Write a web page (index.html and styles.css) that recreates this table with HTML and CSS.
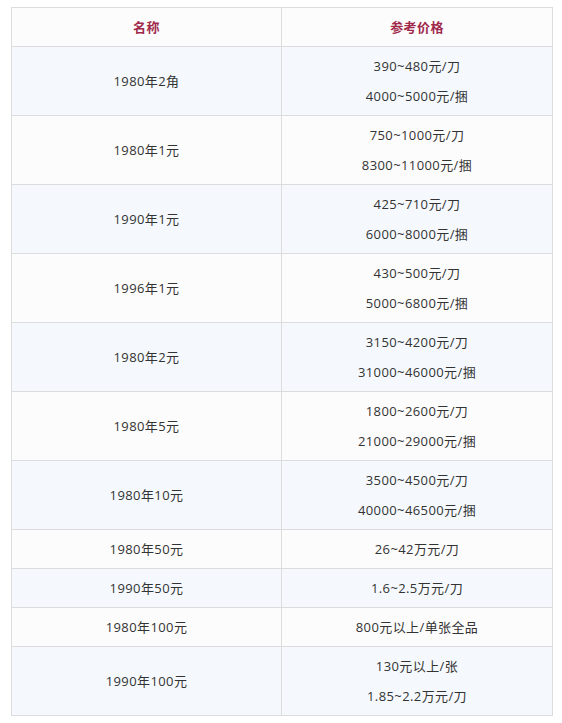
FILE: index.html
```html
<!DOCTYPE html>
<html lang="zh">
<head>
<meta charset="utf-8">
<link rel="stylesheet" href="styles.css">
</head>
<body>
<div class="wrap">
<table class="price">
<colgroup><col class="c1"><col class="c2"></colgroup>
<thead>
<tr><th>名称</th><th>参考价格</th></tr>
</thead>
<tbody>
<tr class="alt"><td>1980年2角</td><td><p>390~480元/刀</p><p>4000~5000元/捆</p></td></tr>
<tr><td>1980年1元</td><td><p>750~1000元/刀</p><p>8300~11000元/捆</p></td></tr>
<tr class="alt"><td>1990年1元</td><td><p>425~710元/刀</p><p>6000~8000元/捆</p></td></tr>
<tr><td>1996年1元</td><td><p>430~500元/刀</p><p>5000~6800元/捆</p></td></tr>
<tr class="alt"><td>1980年2元</td><td><p>3150~4200元/刀</p><p>31000~46000元/捆</p></td></tr>
<tr><td>1980年5元</td><td><p>1800~2600元/刀</p><p>21000~29000元/捆</p></td></tr>
<tr class="alt"><td>1980年10元</td><td><p>3500~4500元/刀</p><p>40000~46500元/捆</p></td></tr>
<tr><td>1980年50元</td><td><p>26~42万元/刀</p></td></tr>
<tr class="alt"><td>1990年50元</td><td><p>1.6~2.5万元/刀</p></td></tr>
<tr><td>1980年100元</td><td><p>800元以上/单张全品</p></td></tr>
<tr class="alt"><td>1990年100元</td><td><p>130元以上/张</p><p>1.85~2.2万元/刀</p></td></tr>
</tbody>
</table>
</div>
</body>
</html>
```
FILE: styles.css
```css
html, body {
  margin: 0;
  padding: 0;
  background: #ffffff;
}
.wrap {
  padding: 7px 10px 0 11px;
}
.price {
  width: 541px;
  border-collapse: collapse;
  table-layout: fixed;
  font-family: "Open Sans", "Noto Sans CJK SC", sans-serif;
  font-size: 13px;
  letter-spacing: 0.4px;
  color: #333333;
}
.price .c1 {
  width: 270px;
}
.price .c2 {
  width: 271px;
}
.price th, .price td {
  border: 1px solid #dcdcdc;
  text-align: center;
  vertical-align: middle;
  padding: 4px 6px;
  line-height: 30px;
  background: #fdfcfc;
}
.price th {
  color: #a0284b;
  font-weight: bold;
  font-family: "Noto Sans CJK SC", sans-serif;
}
.price tr.alt td {
  background: #f5f9fd;
}
.price p {
  margin: 0;
}
```
